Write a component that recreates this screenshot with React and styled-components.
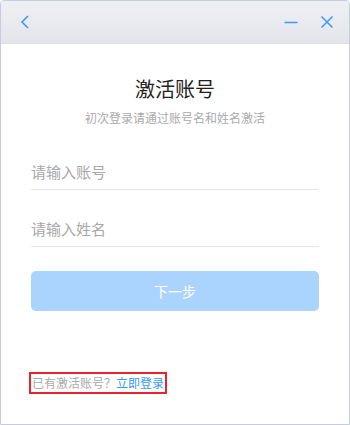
import React from "react";
import styled, { createGlobalStyle } from "styled-components";

const Global = createGlobalStyle`
  html, body { margin: 0; padding: 0; background: #fff; }
  body { font-family: "Noto Sans CJK SC", "Liberation Sans", sans-serif; }
  * { box-sizing: border-box; }
`;

const Window = styled.div`
  width: 350px;
  height: 425px;
  border: 1px solid #c6cbdd;
  border-radius: 4px 4px 0 0;
  display: flex;
  flex-direction: column;
  overflow: hidden;
  background: #fff;
`;

const TitleBar = styled.div`
  height: 43px;
  flex: none;
  background: linear-gradient(#eff0f4, #e3e5ea);
  border-bottom: 1px solid #dcdfe6;
  display: flex;
  align-items: center;
  padding: 0 10px 0 12px;
`;

const IconButton = styled.button`
  border: 0;
  background: none;
  padding: 0;
  width: 24px;
  height: 24px;
  display: flex;
  align-items: center;
  justify-content: center;
  margin-left: ${(p) => p.$gap || 0}px;
  cursor: pointer;
`;

const Spacer = styled.div`
  flex: 1;
`;

const Body = styled.div`
  flex: 1;
  display: flex;
  flex-direction: column;
  padding: 0 30px;
`;

const Title = styled.h1`
  margin: 31px 0 0;
  font-size: 20px;
  font-weight: 400;
  color: #222;
  text-align: center;
  line-height: 28px;
`;

const Subtitle = styled.p`
  margin: 6px 0 0;
  font-size: 12px;
  color: #aaa;
  text-align: center;
  line-height: 18px;
`;

const Field = styled.input`
  margin-top: ${(p) => p.$top}px;
  height: 37px;
  border: 0;
  border-bottom: 1px solid #e4e4e4;
  outline: none;
  font-family: inherit;
  font-size: 15px;
  color: #333;
  padding: 0;
  background: transparent;
  &::placeholder { color: #a8a8a8; }
`;

const Submit = styled.button`
  margin-top: 24px;
  height: 40px;
  border: 0;
  border-radius: 5px;
  background: #aad4fd;
  color: #fff;
  font-family: inherit;
  font-size: 14px;
`;

const Footer = styled.div`
  margin-top: 61px;
  align-self: flex-start;
  margin-left: -2px;
  border: 2px solid #e8242c;
  padding: 0 1px;
  font-size: 12px;
  line-height: 18px;
  color: #aaa;
`;

const Link = styled.a`
  color: #3a9af5;
  text-decoration: none;
`;

const stroke = "#3b9bf7";

export default function App() {
  return (
    <>
      <Global />
      <Window>
        <TitleBar>
          <IconButton aria-label="back">
            <svg width="14" height="16" viewBox="0 0 14 16">
              <path d="M10 2 L4 8 L10 14" fill="none" stroke={stroke} strokeWidth="1.6" />
            </svg>
          </IconButton>
          <Spacer />
          <IconButton aria-label="minimize">
            <svg width="16" height="16" viewBox="0 0 16 16">
              <path d="M1.5 8.5 H14.5" fill="none" stroke={stroke} strokeWidth="1.6" />
            </svg>
          </IconButton>
          <IconButton aria-label="close" $gap={12}>
            <svg width="16" height="16" viewBox="0 0 16 16">
              <path d="M2.5 2.5 L13.5 13.5 M13.5 2.5 L2.5 13.5" fill="none" stroke={stroke} strokeWidth="1.5" />
            </svg>
          </IconButton>
        </TitleBar>
        <Body>
          <Title>激活账号</Title>
          <Subtitle>初次登录请通过账号名和姓名激活</Subtitle>
          <Field $top={26} placeholder="请输入账号" />
          <Field $top={20} placeholder="请输入姓名" />
          <Submit>下一步</Submit>
          <Footer>
            已有激活账号？<Link href="#">立即登录</Link>
          </Footer>
        </Body>
      </Window>
    </>
  );
}
